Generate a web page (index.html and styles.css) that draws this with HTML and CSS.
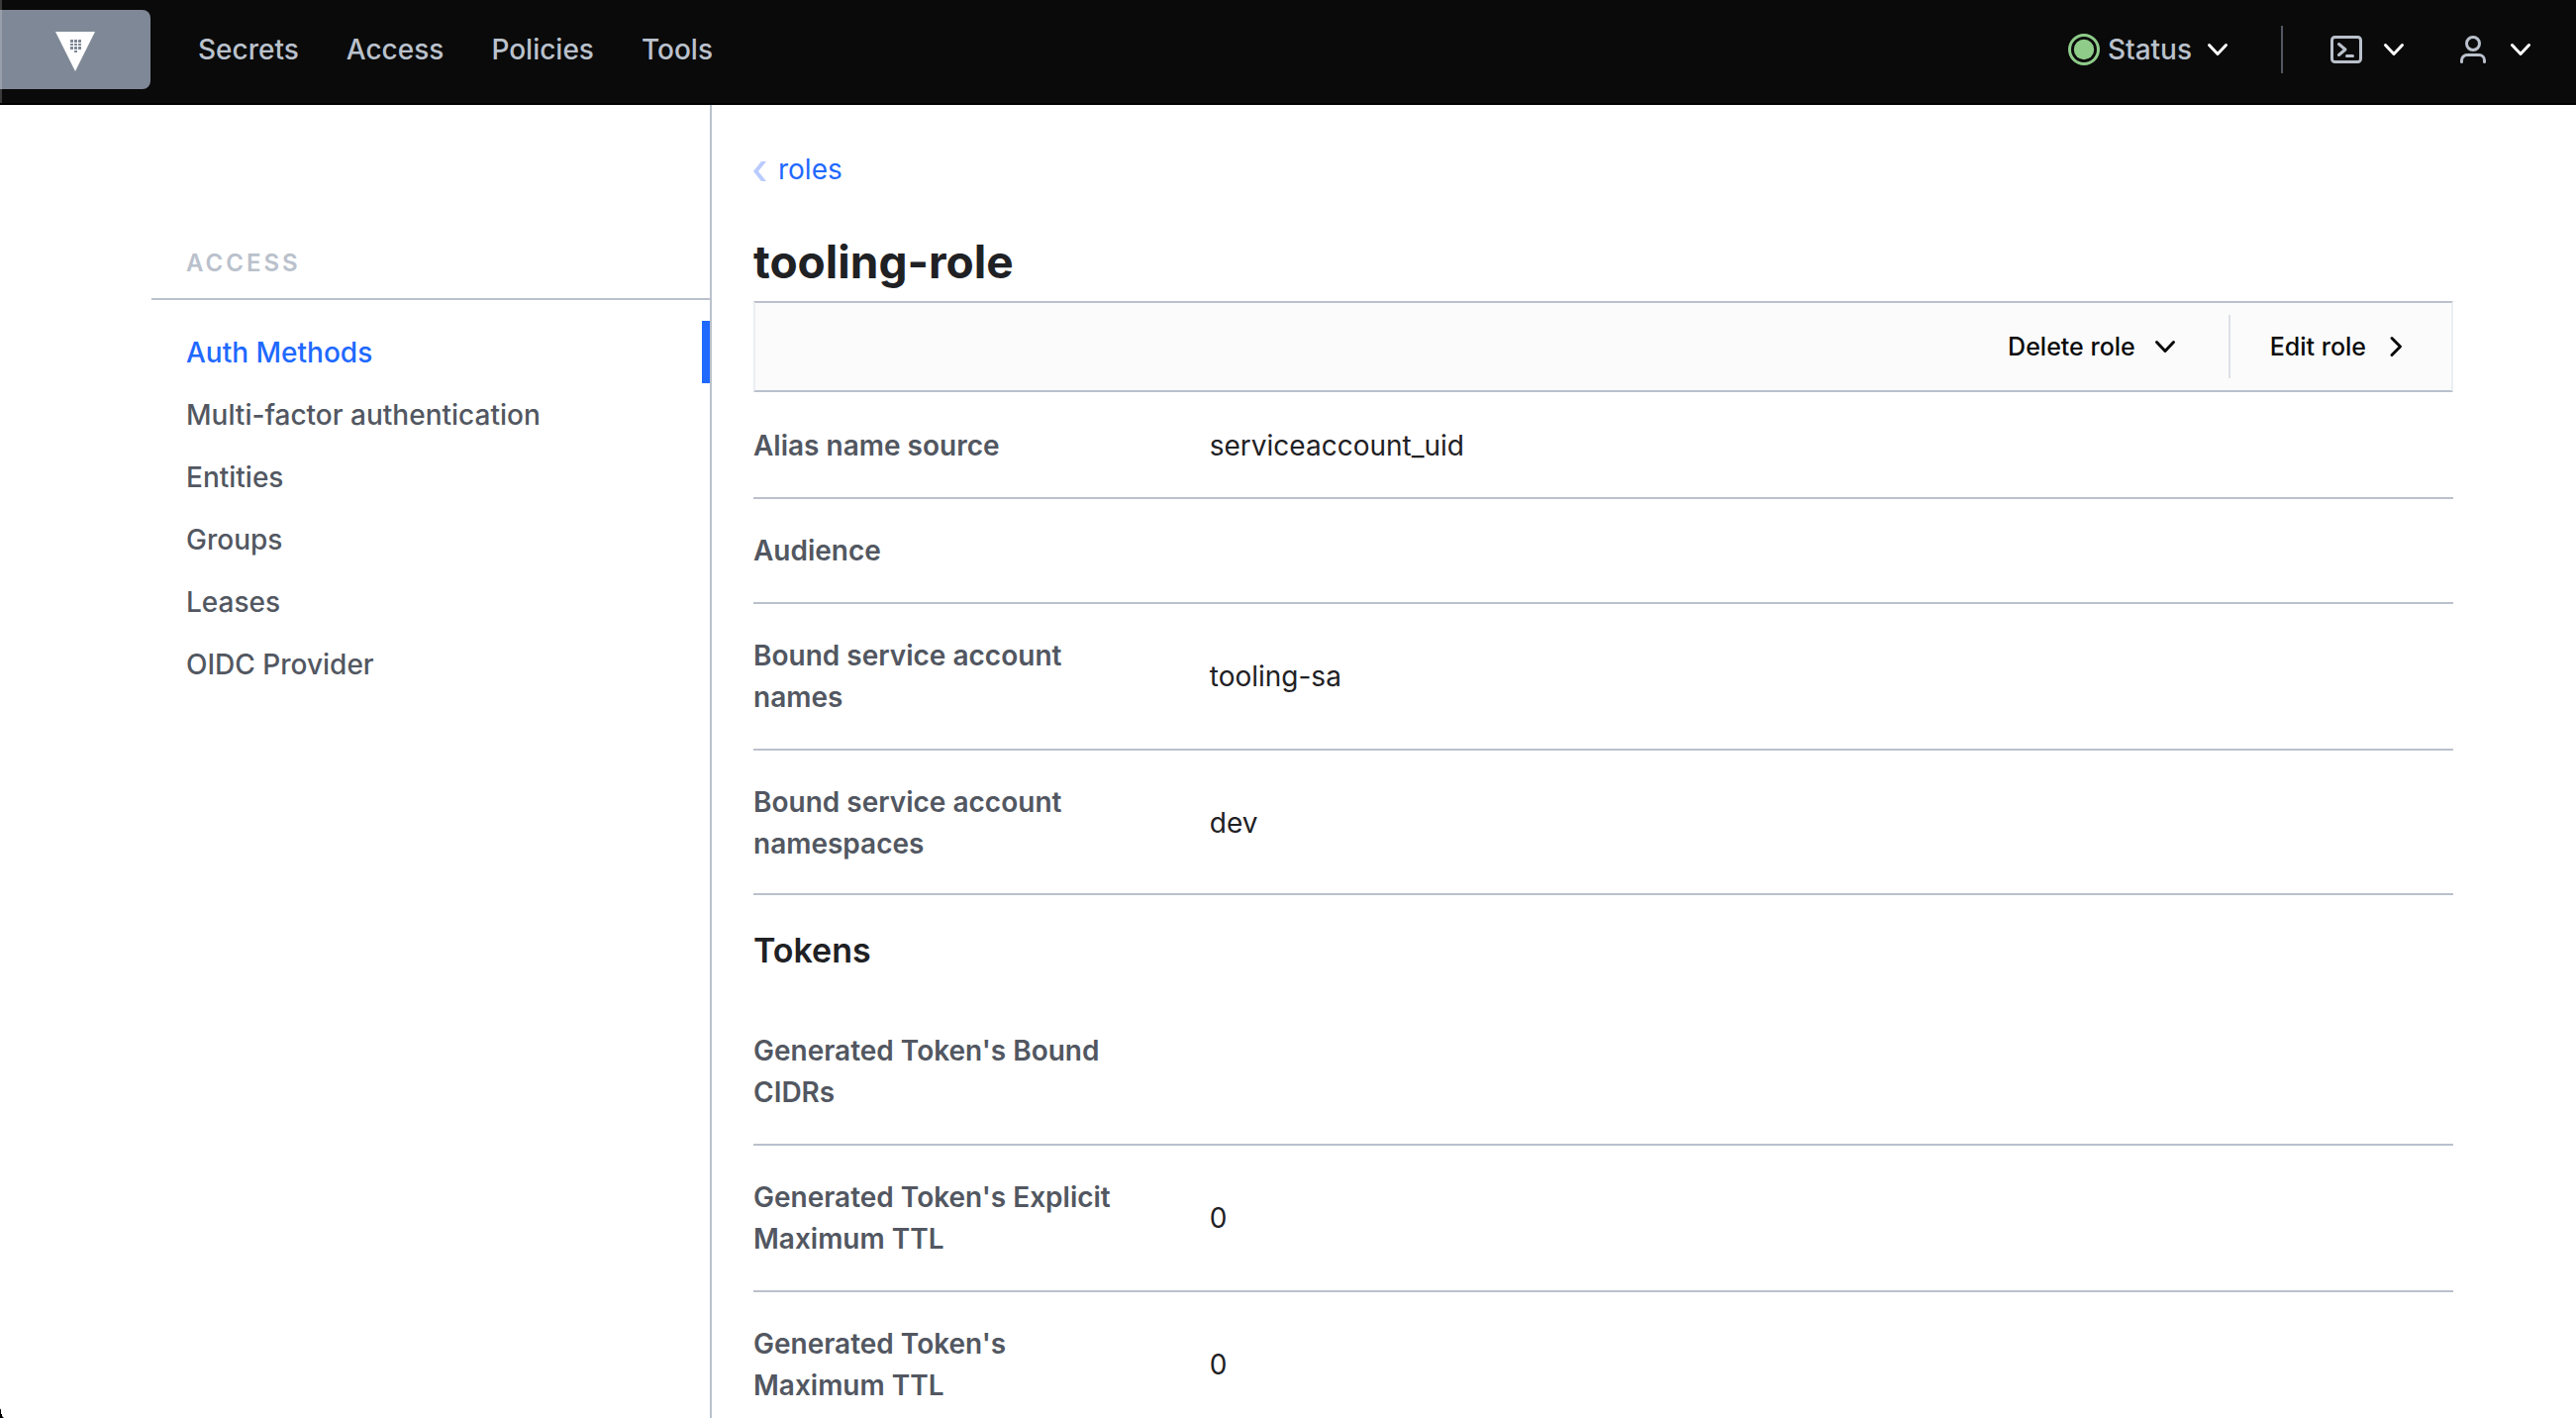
FILE: index.html
```html
<!DOCTYPE html>
<html lang="en">
<head>
  <meta charset="utf-8">
  <meta name="viewport" content="width=device-width, initial-scale=1">
  <title>tooling-role - Vault</title>
  <link rel="stylesheet" href="styles.css">
</head>
<body>
  <svg class="sprite" aria-hidden="true">
    <symbol id="chevron-down" viewBox="0 0 24 24"><path d="M3.500 7.500L12 16.500L20.500 7.500"/></symbol>
    <symbol id="chevron-right" viewBox="0 0 24 24"><path d="M8 3.500L16.500 12L8 20.500"/></symbol>
  </svg>
  <div class="app">
    <header class="navbar">
      <a class="brand" href="#" aria-label="Vault home">
        <svg width="40" height="40" viewBox="0 0 40 40" aria-hidden="true">
          <path fill="#fff" d="M0 0H40L20 40Z"/>
          <path fill="#7f8896" d="M15 8h3v3h-3zM19 8h3v3h-3zM23 8h3v3h-3zM15 12h3v2h-3zM19 12h3v2h-3zM23 12h3v2h-3zM15 15h3v3h-3zM19 15h3v3h-3zM23 15h3v3h-3zM19 19h3v2h-3z"/>
        </svg>
      </a>
      <nav class="main-nav" aria-label="Main">
        <a href="#">Secrets</a>
        <a href="#">Access</a>
        <a href="#">Policies</a>
        <a href="#">Tools</a>
      </nav>
      <div class="nav-tools">
        <button class="nav-button status" type="button">
          <svg width="32" height="32" viewBox="0 0 32 32" aria-hidden="true">
            <circle cx="16" cy="16" r="14.500" fill="none" stroke="#8fcc8a" stroke-width="3"/>
            <circle cx="16" cy="16" r="10.200" fill="#8fcc8a"/>
          </svg>
          <span>Status</span>
          <svg class="chevron" aria-hidden="true"><use href="#chevron-down"/></svg>
        </button>
        <span class="nav-divider"></span>
        <button class="nav-button console" type="button" aria-label="Console">
          <svg class="outline" width="32" height="28" viewBox="0 0 32 28" aria-hidden="true">
            <rect x="1.500" y="1.500" width="29" height="25" rx="3"/>
            <path d="M8.500 8.500L15 14L8.500 19.500M16.500 20.500H22.500"/>
          </svg>
          <svg class="chevron" aria-hidden="true"><use href="#chevron-down"/></svg>
        </button>
        <button class="nav-button user" type="button" aria-label="User">
          <svg class="outline" width="28" height="28" viewBox="0 0 28 28" aria-hidden="true">
            <circle cx="14" cy="8" r="6.500"/>
            <path d="M2.500 26.500V25A5.500 5.500 0 0 1 8 19.500H20A5.500 5.500 0 0 1 25.500 25V26.500"/>
          </svg>
          <svg class="chevron" aria-hidden="true"><use href="#chevron-down"/></svg>
        </button>
      </div>
    </header>

    <div class="page">
      <aside class="sidebar">
        <h2 class="menu-label">Access</h2>
        <nav class="menu" aria-label="Access">
          <a class="active" href="#" aria-current="page">Auth Methods</a>
          <a href="#">Multi-factor authentication</a>
          <a href="#">Entities</a>
          <a href="#">Groups</a>
          <a href="#">Leases</a>
          <a href="#">OIDC Provider</a>
        </nav>
      </aside>

      <main class="content">
        <nav class="breadcrumb" aria-label="Breadcrumb">
          <a href="#">
            <svg width="13" height="24" viewBox="0 0 13 24" aria-hidden="true"><path fill="#bacbff" d="M8 4H13L5 14L13 24H8L0 14Z"/></svg>
            roles
          </a>
        </nav>
        <h1>tooling-role</h1>
        <div class="toolbar">
          <button class="toolbar-action" type="button">Delete role <svg class="chevron" aria-hidden="true"><use href="#chevron-down"/></svg></button>
          <span class="toolbar-divider"></span>
          <a class="toolbar-action" href="#">Edit role <svg class="chevron" aria-hidden="true"><use href="#chevron-right"/></svg></a>
        </div>

        <dl class="details role">
          <div class="row"><dt>Alias name source</dt><dd>serviceaccount_uid</dd></div>
          <div class="row"><dt>Audience</dt><dd></dd></div>
          <div class="row"><dt>Bound service account names</dt><dd>tooling-sa</dd></div>
          <div class="row"><dt>Bound service account namespaces</dt><dd>dev</dd></div>
        </dl>

        <h2 class="section-title">Tokens</h2>
        <dl class="details">
          <div class="row"><dt>Generated Token's Bound CIDRs</dt><dd></dd></div>
          <div class="row"><dt>Generated Token's Explicit Maximum TTL</dt><dd>0</dd></div>
          <div class="row"><dt>Generated Token's Maximum TTL</dt><dd>0</dd></div>
        </dl>
      </main>
    </div>
  </div>
</body>
</html>
```

FILE: styles.css
```css
* {
  box-sizing: border-box;
}

body {
  margin: 0;
  background: #fff;
  color: #1f2124;
  font-family: Inter, "Liberation Sans", sans-serif;
  font-size: 28px;
  line-height: 42px;
}

a {
  color: inherit;
  text-decoration: none;
}

button {
  padding: 0;
  border: 0;
  background: none;
  color: inherit;
  font: inherit;
  cursor: pointer;
}

h1,
h2,
dl,
dd {
  margin: 0;
}

svg {
  flex: none;
}

.sprite {
  display: none;
}

.app {
  display: flex;
  flex-direction: column;
  height: 100vh;
}

/* The window's rounded bottom-left corner */
.app::after {
  content: "";
  position: fixed;
  left: 0;
  bottom: 0;
  width: 4px;
  height: 16px;
  background: radial-gradient(ellipse 4px 16px at 100% 0, transparent 96%, #000 100%);
}

.chevron {
  width: 24px;
  height: 24px;
  fill: none;
  stroke: currentColor;
  stroke-width: 3;
  stroke-linecap: round;
  stroke-linejoin: round;
}

/* Top bar */
.navbar {
  position: relative;
  display: flex;
  flex: none;
  align-items: flex-start;
  height: 106px;
  padding: 10px 44px 0 0;
  background: #0a0a0a;
  border-bottom: 2px solid #000;
  color: #bac1cc;
  font-weight: 500;
}

.navbar::after {
  content: "";
  position: absolute;
  top: 0;
  left: 0;
  width: 2px;
  height: 104px;
  background: rgba(255, 255, 255, 0.2);
}

.brand {
  display: flex;
  align-items: center;
  justify-content: center;
  width: 152px;
  height: 80px;
  padding-top: 4px;
  border-radius: 0 8px 8px 0;
  background: #7f8896;
}

.main-nav {
  display: flex;
  align-items: center;
  gap: 48px;
  height: 80px;
  margin-left: 48px;
}

.nav-tools {
  display: flex;
  align-items: center;
  height: 80px;
  margin-left: auto;
}

.nav-button {
  display: flex;
  align-items: center;
}

.nav-button .chevron {
  color: #fff;
}

.status {
  gap: 8px;
}

.status .chevron {
  margin-left: 6px;
}

.nav-divider {
  width: 2px;
  height: 48px;
  margin: 0 48px 0 52px;
  background: #525761;
}

.console {
  gap: 20px;
  margin-right: 54px;
}

.user {
  gap: 22px;
}

.outline {
  fill: none;
  stroke: #bac1cc;
  stroke-width: 3;
  stroke-linecap: round;
  stroke-linejoin: round;
}

/* Page columns */
.page {
  display: flex;
  flex: 1;
  min-height: 0;
  overflow-y: auto;
  scrollbar-width: none;
}

.sidebar {
  flex: none;
  width: 719px;
  height: max-content;
  min-height: 100%;
  padding: 139px 0 0 153px;
  border-right: 2px solid #bac1cc;
}

.menu-label {
  padding: 0 35px 14px;
  border-bottom: 2px solid #bac1cc;
  color: #bac1cc;
  font-size: 24px;
  font-weight: 600;
  line-height: 42px;
  letter-spacing: 3px;
  text-transform: uppercase;
}

.menu {
  display: flex;
  flex-direction: column;
  padding-top: 21px;
}

.menu a {
  padding: 11px 28px 10px 35px;
  border-right: 8px solid transparent;
  color: #525761;
  font-weight: 500;
}

.menu .active {
  border-color: #1f69ff;
  color: #1f69ff;
}

.content {
  flex: 1;
  min-width: 0;
  height: max-content;
  padding: 44px 124px 0 42px;
}

.breadcrumb {
  display: flex;
}

.breadcrumb a {
  display: flex;
  align-items: center;
  gap: 12px;
  color: #1f69ff;
}

h1 {
  margin-top: 42px;
  font-size: 46px;
  font-weight: 700;
  line-height: 60px;
}

/* Toolbar */
.toolbar {
  display: flex;
  align-items: center;
  justify-content: flex-end;
  height: 92px;
  margin-top: 10px;
  padding-right: 44px;
  border: 2px solid #bac1cc;
  border-right-color: #ebeef2;
  border-left-color: #ebeef2;
  background: #fbfbfc;
}

.toolbar-action {
  display: flex;
  align-items: center;
  gap: 18px;
  color: #0a0a0a;
  font-size: 25px;
  font-weight: 500;
}

.toolbar-divider {
  width: 2px;
  height: 64px;
  margin: 0 40px 0 52px;
  background: #dce0e6;
}

/* Name and value rows */
.role {
  padding-top: 2px;
  border-bottom: 2px solid #bac1cc;
}

.row {
  display: grid;
  grid-template-columns: 1fr 3fr;
  align-items: center;
  gap: 42px;
  padding: 31px 0;
  border-bottom: 2px solid #bac1cc;
}

.role .row:last-child {
  padding-bottom: 29px;
  border-bottom: 0;
}

dt {
  padding-right: 32px;
  color: #525761;
  font-weight: 600;
}

.section-title {
  padding: 32px 0 25px;
  font-size: 34px;
  font-weight: 600;
  line-height: 48px;
}
```
